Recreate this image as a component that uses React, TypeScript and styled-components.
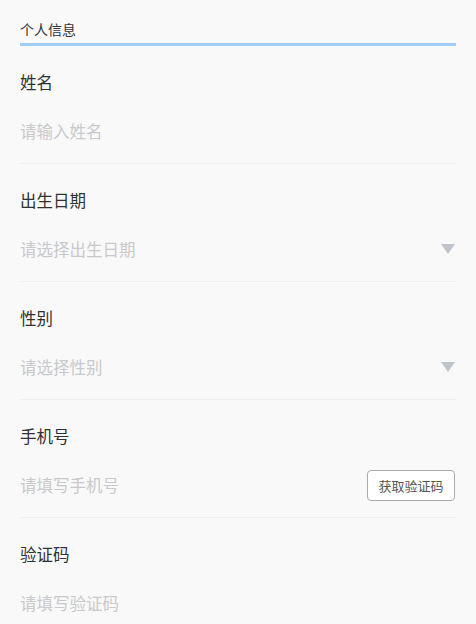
import styled, { createGlobalStyle } from 'styled-components'

const GlobalStyle = createGlobalStyle`
    html, body {
        margin: 0;
        background: #f9f9f9;
        font-family: "Noto Sans CJK SC", "Noto Sans", sans-serif;
    }
`;

const Page = styled.div`
    padding: 0 20px;
`;

const Header = styled.div`
    padding-top: 19px;
    padding-bottom: 3px;
    border-bottom: 3px solid #a0cdf6;
`;

const Title = styled.h1`
    margin: 0;
    font-size: 14px;
    line-height: 21px;
    font-weight: 400;
    color: #333;
`;

interface SectionProps {
    last?: boolean;
}

const Section = styled.div<SectionProps>`
    padding-top: 24px;
    padding-bottom: 12px;
    border-bottom: 1px solid ${props => props.last ? 'transparent' : '#efefef'};
`;

const Label = styled.div`
    font-size: 16.5px;
    line-height: 24px;
    color: #303133;
`;

const InputRow = styled.div`
    margin-top: 17px;
    height: 40px;
    display: flex;
    align-items: center;
    justify-content: space-between;
`;

const Placeholder = styled.span`
    font-size: 16.5px;
    color: #c8c9cc;
`;

const Arrow = styled.span`
    width: 0;
    height: 0;
    margin-right: 1px;
    border-left: 7px solid transparent;
    border-right: 7px solid transparent;
    border-top: 10px solid #c0c4cc;
`;

const CodeButton = styled.button`
    height: 31px;
    width: 88px;
    padding: 0;
    margin-right: 1px;
    border: 1px solid #aaa;
    border-radius: 4px;
    background: #fff;
    font-family: inherit;
    font-size: 13px;
    color: #555;
`;

interface FieldProps {
    label: string;
    placeholder: string;
    last?: boolean;
    select?: boolean;
    code?: boolean;
}

const Field: React.FC<FieldProps> = (props) => {
    return (
        <Section last={props.last}>
            <Label>{props.label}</Label>
            <InputRow>
                <Placeholder>{props.placeholder}</Placeholder>
                {props.select && <Arrow />}
                {props.code && <CodeButton>获取验证码</CodeButton>}
            </InputRow>
        </Section>
    );
}

export default function App() {
    return (
        <Page>
            <GlobalStyle />
            <Header>
                <Title>个人信息</Title>
            </Header>
            <Field label="姓名" placeholder="请输入姓名" />
            <Field label="出生日期" placeholder="请选择出生日期" select />
            <Field label="性别" placeholder="请选择性别" select />
            <Field label="手机号" placeholder="请填写手机号" code />
            <Field last label="验证码" placeholder="请填写验证码" />
        </Page>
    );
}
